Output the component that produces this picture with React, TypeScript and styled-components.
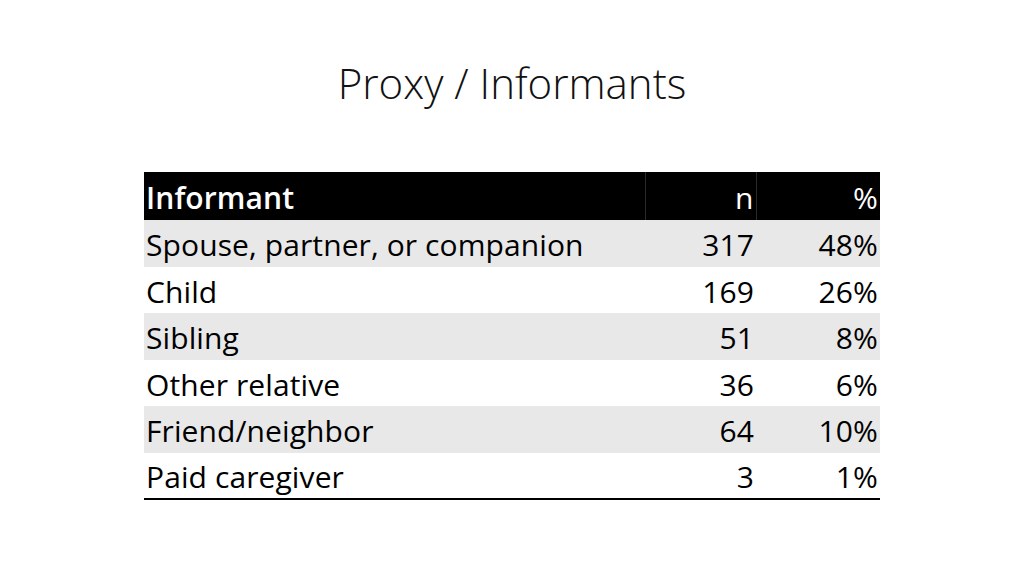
import { createGlobalStyle } from 'styled-components';
import styled from 'styled-components';

const GlobalStyle = createGlobalStyle`
  html, body {
    margin: 0;
    padding: 0;
    background: #ffffff;
  }
  body {
    font-family: "Open Sans", Lato, sans-serif;
    color: #000000;
  }
`;

interface Row {
  informant: string;
  n: number;
  pct: string;
}

const rows: Row[] = [
  { informant: 'Spouse, partner, or companion', n: 317, pct: '48%' },
  { informant: 'Child', n: 169, pct: '26%' },
  { informant: 'Sibling', n: 51, pct: '8%' },
  { informant: 'Other relative', n: 36, pct: '6%' },
  { informant: 'Friend/neighbor', n: 64, pct: '10%' },
  { informant: 'Paid caregiver', n: 3, pct: '1%' },
];

const Slide = styled.div`
  width: 1024px;
  height: 576px;
  box-sizing: border-box;
  padding-top: 54px;
  display: flex;
  flex-direction: column;
  align-items: center;
`;

const Title = styled.h1`
  margin: 0;
  font-family: "Open Sans", Lato, sans-serif;
  font-weight: 300;
  font-size: 42px;
  line-height: 58px;
  color: #111111;
`;

const Table = styled.table`
  margin-top: 60px;
  width: 736px;
  table-layout: fixed;
  border-collapse: collapse;
  font-size: 30px;
  letter-spacing: 0.1px;
  border-bottom: 2px solid #000000;
`;

const HeadRow = styled.tr`
  background: #000000;
  color: #ffffff;
  height: 48px;
`;

const BodyRow = styled.tr<{ $shaded: boolean }>`
  background: ${(p) => (p.$shaded ? '#e8e8e8' : '#ffffff')};
  height: 46.5px;
`;

const Th = styled.th<{ $align?: 'left' | 'right'; $divider?: boolean }>`
  padding: 4px 2px 0;
  line-height: 40px;
  text-align: ${(p) => p.$align ?? 'right'};
  font-weight: ${(p) => (p.$align === 'left' ? 600 : 400)};
  border-left: ${(p) => (p.$divider ? '1px solid #2a2a2a' : 'none')};
  vertical-align: middle;
`;

const Td = styled.td<{ $align?: 'left' | 'right' }>`
  padding: 4px 2px 0;
  line-height: 40px;
  text-align: ${(p) => p.$align ?? 'right'};
  vertical-align: middle;
  white-space: nowrap;
`;

export default function App() {
  return (
    <>
      <GlobalStyle />
      <Slide>
        <Title>Proxy / Informants</Title>
        <Table>
          <colgroup>
            <col style={{ width: 501 }} />
            <col style={{ width: 111 }} />
            <col style={{ width: 124 }} />
          </colgroup>
          <thead>
            <HeadRow>
              <Th $align="left">Informant</Th>
              <Th $divider>n</Th>
              <Th $divider>%</Th>
            </HeadRow>
          </thead>
          <tbody>
            {rows.map((r, i) => (
              <BodyRow key={r.informant} $shaded={i % 2 === 0}>
                <Td $align="left">{r.informant}</Td>
                <Td>{r.n}</Td>
                <Td>{r.pct}</Td>
              </BodyRow>
            ))}
          </tbody>
        </Table>
      </Slide>
    </>
  );
}
